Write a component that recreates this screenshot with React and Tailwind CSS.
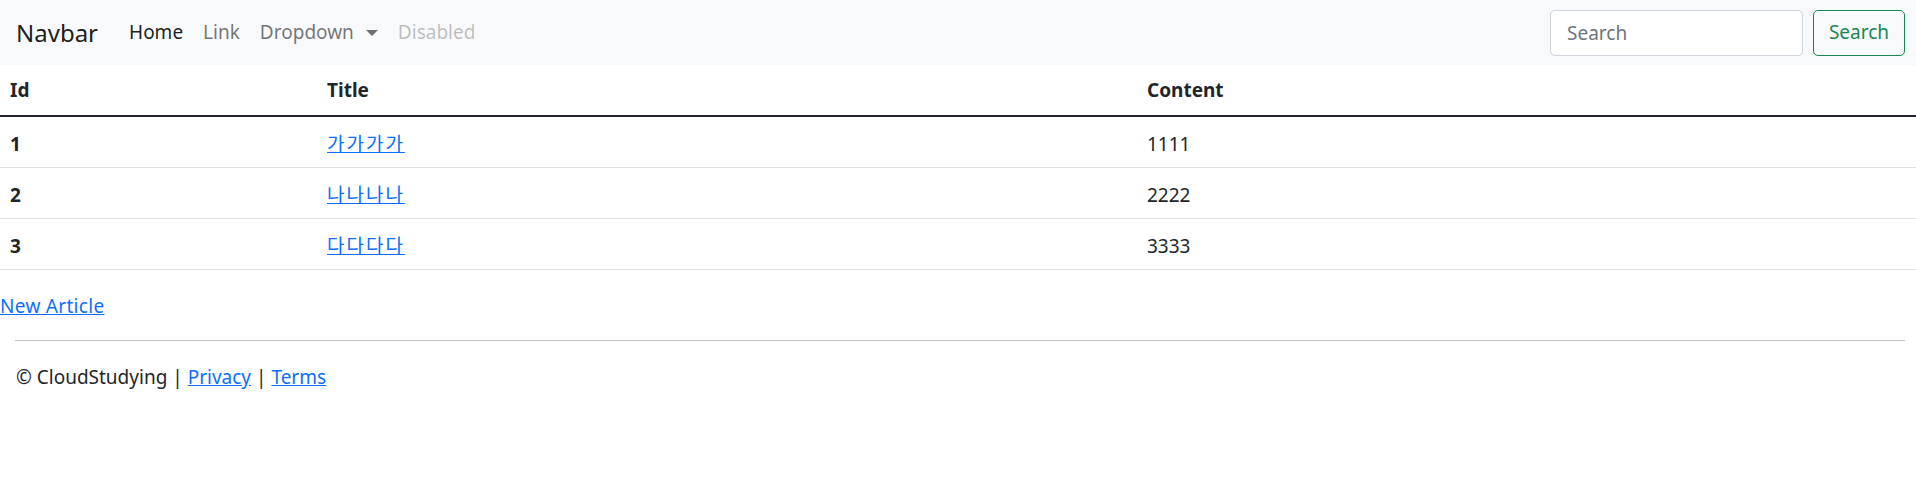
import React from 'react';

const articles = [
  { id: 1, title: '가가가가', content: '1111' },
  { id: 2, title: '나나나나', content: '2222' },
  { id: 3, title: '다다다다', content: '3333' },
];

const font = { fontFamily: '"Noto Sans", "Noto Sans CJK KR", sans-serif' };

export default function App() {
  return (
    <div className="min-h-[503px] bg-white text-[#212529] text-[19px]" style={font}>

      {/* NAVBAR */}
      <header className="h-[65px] bg-[#f8f9fa] flex items-center justify-between pl-4 pr-[11px]">
        <div className="flex items-center">
          <a href="#" className="text-[24px] text-black/90 mr-[21px] leading-none">Navbar</a>
          <nav className="flex items-center">
            <a href="#" className="px-[10px] text-black/90">Home</a>
            <a href="#" className="px-[10px] text-black/55">Link</a>
            <a href="#" className="px-[10px] text-black/55 flex items-center">
              Dropdown
              <span className="ml-3 w-0 h-0 border-x-[6px] border-t-[6px] border-x-transparent border-t-current" />
            </a>
            <span className="px-[10px] text-black/25">Disabled</span>
          </nav>
        </div>

        <form className="flex items-center gap-[10px]" onSubmit={(e) => e.preventDefault()}>
          <input
            type="search"
            placeholder="Search"
            className="w-[253px] h-[46px] px-[16px] border border-[#ced4da] rounded-[5px] bg-white text-[19px] placeholder:text-[#6c757d] outline-none"
          />
          <button className="w-[92px] h-[46px] border border-[#198754] rounded-[5px] text-[#198754] text-[19px]">
            Search
          </button>
        </form>
      </header>

      {/* TABLE */}
      <div>
        <div className="grid grid-cols-[317px_820px_1fr] h-[52px] items-center border-b-2 border-[#212529] font-bold">
          <div className="px-[10px]">Id</div>
          <div className="px-[10px]">Title</div>
          <div className="px-[10px]">Content</div>
        </div>
        {articles.map((a) => (
          <div key={a.id} className="grid grid-cols-[317px_820px_1fr] h-[51px] items-center border-b border-[#dee2e6] pt-[4px]">
            <div className="px-[10px] font-bold">{a.id}</div>
            <div className="px-[10px]">
              <a href="#" className="text-[#0d6efd] underline tracking-[2px]">{a.title}</a>
            </div>
            <div className="px-[10px]">{a.content}</div>
          </div>
        ))}
      </div>

      <div className="mt-[22px] leading-[28px]">
        <a href="#" className="text-[#0d6efd] underline tracking-[0.3px]">New Article</a>
      </div>

      {/* FOOTER */}
      <footer className="pl-[15px] pr-[11px]">
        <hr className="mt-[20px] border-t border-[#c4c4c4]" />
        <div className="pt-[22px] pl-[1px] leading-[28px]">
          © CloudStudying | <a href="#" className="text-[#0d6efd] underline">Privacy</a> | <a href="#" className="text-[#0d6efd] underline">Terms</a>
        </div>
      </footer>
    </div>
  );
}
